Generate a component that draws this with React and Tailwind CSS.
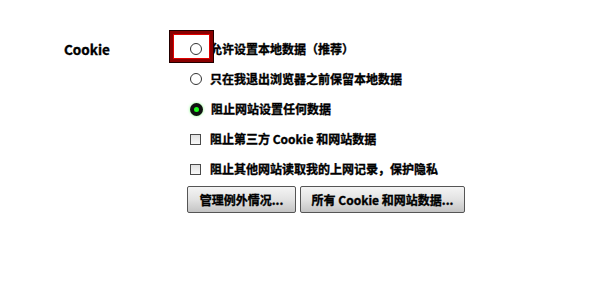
import React, { useState } from "react";

const RADIOS = [
  "允许设置本地数据（推荐）",
  "只在我退出浏览器之前保留本地数据",
  "阻止网站设置任何数据",
];

const CHECKS = ["阻止第三方 Cookie 和网站数据", "阻止其他网站读取我的上网记录，保护隐私"];

function Radio({ checked }) {
  if (checked)
    return (
      <span className="w-[13px] h-[13px] rounded-full bg-[#111] flex items-center justify-center shadow-[0_0_3px_#7dff7d] shrink-0">
        <span className="w-[5px] h-[5px] rounded-full bg-[#1aff1a]" />
      </span>
    );
  return <span className="w-[12px] h-[12px] rounded-full border-[1.5px] border-[#333] bg-white shrink-0" />;
}

function Checkbox() {
  return (
    <span className="w-[11px] h-[11px] border border-[#4a4a4a] bg-gradient-to-b from-[#e2e2e2] to-[#f8f8f8] shrink-0" />
  );
}

export default function App() {
  const [choice] = useState(2);

  return (
    <div className="w-[600px] h-[292px] bg-white font-['Noto_Sans_CJK_SC','Open_Sans',sans-serif] text-[12px] font-bold text-black [-webkit-text-stroke:0.35px_#000]">
      <div className="flex pt-[34px]">
        <div className="w-[187px] pl-[64px] h-[30px] flex items-center text-[13.5px]">Cookie</div>
        <div className="relative flex flex-col">
          <div className="absolute left-[-17px] top-[-3px] w-[43px] h-[31px] border-[3px] border-[#8a0000] shadow-[inset_0_0_0_1px_#e00000,0_0_0_1px_#200]" />
          {RADIOS.map((label, i) => (
            <div key={label} className="h-[30px] flex items-center pl-[3px] gap-[8px]">
              <Radio checked={choice === i} />
              <span>{label}</span>
            </div>
          ))}
          {CHECKS.map((label) => (
            <div key={label} className="h-[30px] flex items-center pl-[3px] gap-[9px]">
              <Checkbox />
              <span>{label}</span>
            </div>
          ))}
          <div className="flex gap-[4px] mt-[2px]">
            {["管理例外情况...", "所有 Cookie 和网站数据..."].map((b, i) => (
              <button
                key={b}
                className={`h-[27px] ${i === 0 ? "w-[109px]" : "w-[165px]"} border border-[#555] rounded-[2px] bg-gradient-to-b from-[#f4f4f4] via-[#e2e2e2] to-[#c4c4c4] text-[12px] font-bold flex items-center justify-center`}
              >
                {b}
              </button>
            ))}
          </div>
        </div>
      </div>
    </div>
  );
}
